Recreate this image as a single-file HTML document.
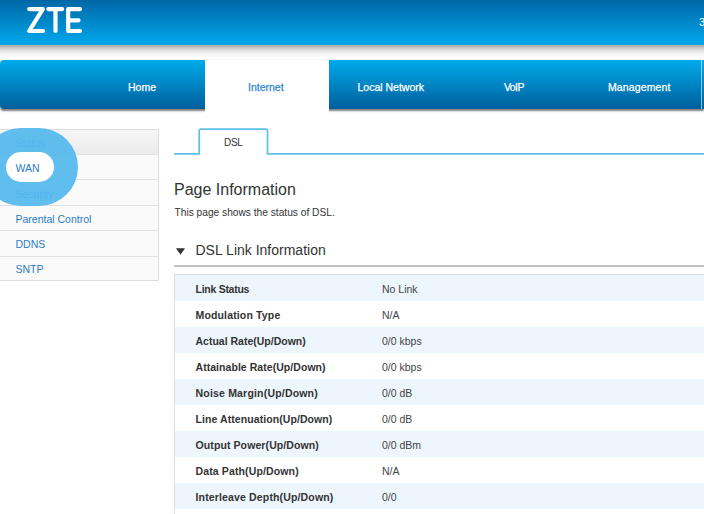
<!DOCTYPE html>
<html><head><meta charset="utf-8">
<style>
*{margin:0;padding:0;box-sizing:border-box}
html,body{width:704px;height:514px;overflow:hidden;background:#fff;font-family:"Liberation Sans",sans-serif;position:relative}
.abs{position:absolute}
#hdr{left:0;top:0;width:704px;height:45px;background:linear-gradient(#0067a6,#00a9ec)}
#shadow{left:0;top:45px;width:704px;height:14px;background:linear-gradient(#a8a4a2,#c9c9c9 20%,#dedede 36%,#ececec 50%,#f6f6f6 65%,#fbfbfb 80%,#fff)}
#nav{left:0;top:60px;width:704px;height:49px;background:linear-gradient(#00abeb,#005e9c);border-top-left-radius:4px;border-bottom-left-radius:4px;box-shadow:0 1.5px 2px rgba(0,0,0,.5)}
#navsep{left:701px;top:60px;width:1px;height:49px;background:rgba(255,255,255,.55)}
#tabwhite{left:205px;top:60px;width:124px;height:54px;background:#fff}
.nv{top:81px;font-size:10.5px;color:#fff;line-height:12px;white-space:nowrap;-webkit-text-stroke:0.25px #fff}
#sb{left:-1px;top:129px;width:160px;height:152px;border:1px solid #dedede;background:#fafafa}
.sbrow{left:0;width:158px;height:1px;background:#e2e2e2}
#sbhead{left:0;top:130px;width:158px;height:24px;background:linear-gradient(#f6f6f6,#ebebeb)}
.si{left:15.5px;font-size:10.5px;color:#2e7cc6;line-height:12px;white-space:nowrap}
#ring{left:-18px;top:128px;width:96px;height:78px;border-radius:39px;background:rgba(82,184,238,.92)}
#pill{left:6px;top:152px;width:48px;height:30px;border-radius:15px;background:#fff}
.t{color:#333;white-space:nowrap}
.tl{left:195.5px;font-size:10.5px;line-height:12px;font-weight:bold;color:#333;white-space:nowrap}
.tv{left:382px;font-size:10.5px;line-height:12px;color:#444;white-space:nowrap}
</style></head><body>
<div id="hdr" class="abs"></div>
<svg class="abs" style="left:0;top:0" width="100" height="45">
<g stroke="#fff" stroke-width="4.2" fill="none" stroke-linecap="round" stroke-linejoin="round">
<path d="M29.2 9.1H42.8L29.2 31H43"/>
<path d="M48.3 9.1H62.2M55.5 9.1V31"/>
<path d="M80 9.1H68.2V31H80M68.2 20.3H78.5"/>
</g></svg>
<div class="abs" style="left:699px;top:16px;font-size:11px;color:#fff">3:</div>
<div id="shadow" class="abs"></div>
<div id="nav" class="abs"></div>
<div id="tabwhite" class="abs"></div>
<div id="navsep" class="abs"></div>
<div class="abs nv" style="left:128px">Home</div>
<div class="abs nv" style="left:248px;color:#2f86cf;-webkit-text-stroke:0.25px #2f86cf">Internet</div>
<div class="abs nv" style="left:357.5px">Local Network</div>
<div class="abs nv" style="left:504px;letter-spacing:-0.6px">VoIP</div>
<div class="abs nv" style="left:608px;letter-spacing:0.12px">Management</div>

<div id="sb" class="abs"></div>
<div id="sbhead" class="abs"></div>
<div class="abs sbrow" style="top:154px"></div>
<div class="abs sbrow" style="top:179px"></div>
<div class="abs sbrow" style="top:205px"></div>
<div class="abs sbrow" style="top:230px"></div>
<div class="abs sbrow" style="top:256px"></div>
<div class="abs si" style="top:136.5px">Status</div>
<div class="abs si" style="top:161.5px">WAN</div>
<div class="abs si" style="top:187.5px">Security</div>
<div class="abs si" style="top:212.5px">Parental Control</div>
<div class="abs si" style="top:238px">DDNS</div>
<div class="abs si" style="top:263px">SNTP</div>
<div id="ring" class="abs"></div>
<div id="pill" class="abs"></div>
<div class="abs si" style="top:161.5px">WAN</div>

<!-- content -->
<svg class="abs" style="left:0;top:0" width="704" height="170"><path d="M174 153.9H199.2V130.7Q199.2 129.2 200.7 129.2H266Q267.5 129.2 267.5 130.7V153.9H704" fill="none" stroke="#5fc0e6" stroke-width="1.7"/></svg>
<div class="abs t" style="left:224px;top:137px;font-size:10px;letter-spacing:-0.3px;line-height:12px">DSL</div>
<div class="abs t" style="left:174px;top:181px;font-size:16px;line-height:18px">Page Information</div>
<div class="abs t" style="left:174.5px;top:207px;font-size:10.2px;line-height:12px">This page shows the status of DSL.</div>
<svg class="abs" style="left:176px;top:248px" width="10" height="8"><path d="M0 0.3H9L4.5 6.8Z" fill="#333"/></svg>
<div class="abs t" style="left:195.5px;top:242px;font-size:14px;line-height:16px">DSL Link Information</div>
<div class="abs" style="left:174px;top:265px;width:530px;height:2px;background:#c2c2c2"></div>

<div class="abs" style="left:174px;top:274px;width:540px;height:250px;border:1px solid #dcdcdc;background:#fff"></div>
<div class="abs" style="left:175px;top:275px;width:529px;height:26px;background:#edf5fd"></div>
<div class="abs tl" style="top:283px;letter-spacing:-0.27px">Link Status</div>
<div class="abs tv" style="top:283px">No Link</div>
<div class="abs tl" style="top:309px;letter-spacing:0.15px">Modulation Type</div>
<div class="abs tv" style="top:309px">N/A</div>
<div class="abs" style="left:175px;top:327px;width:529px;height:26px;background:#edf5fd"></div>
<div class="abs tl" style="top:335px">Actual Rate(Up/Down)</div>
<div class="abs tv" style="top:335px">0/0 kbps</div>
<div class="abs tl" style="top:361px;letter-spacing:0.05px">Attainable Rate(Up/Down)</div>
<div class="abs tv" style="top:361px">0/0 kbps</div>
<div class="abs" style="left:175px;top:379px;width:529px;height:26px;background:#edf5fd"></div>
<div class="abs tl" style="top:387px;letter-spacing:0.19px">Noise Margin(Up/Down)</div>
<div class="abs tv" style="top:387px">0/0 dB</div>
<div class="abs tl" style="top:413px;letter-spacing:0.08px">Line Attenuation(Up/Down)</div>
<div class="abs tv" style="top:413px">0/0 dB</div>
<div class="abs" style="left:175px;top:431px;width:529px;height:26px;background:#edf5fd"></div>
<div class="abs tl" style="top:439px;letter-spacing:0.1px">Output Power(Up/Down)</div>
<div class="abs tv" style="top:439px">0/0 dBm</div>
<div class="abs tl" style="top:465px;letter-spacing:0.13px">Data Path(Up/Down)</div>
<div class="abs tv" style="top:465px">N/A</div>
<div class="abs" style="left:175px;top:483px;width:529px;height:26px;background:#edf5fd"></div>
<div class="abs tl" style="top:491px;letter-spacing:0.15px">Interleave Depth(Up/Down)</div>
<div class="abs tv" style="top:491px">0/0</div>
</body></html>
